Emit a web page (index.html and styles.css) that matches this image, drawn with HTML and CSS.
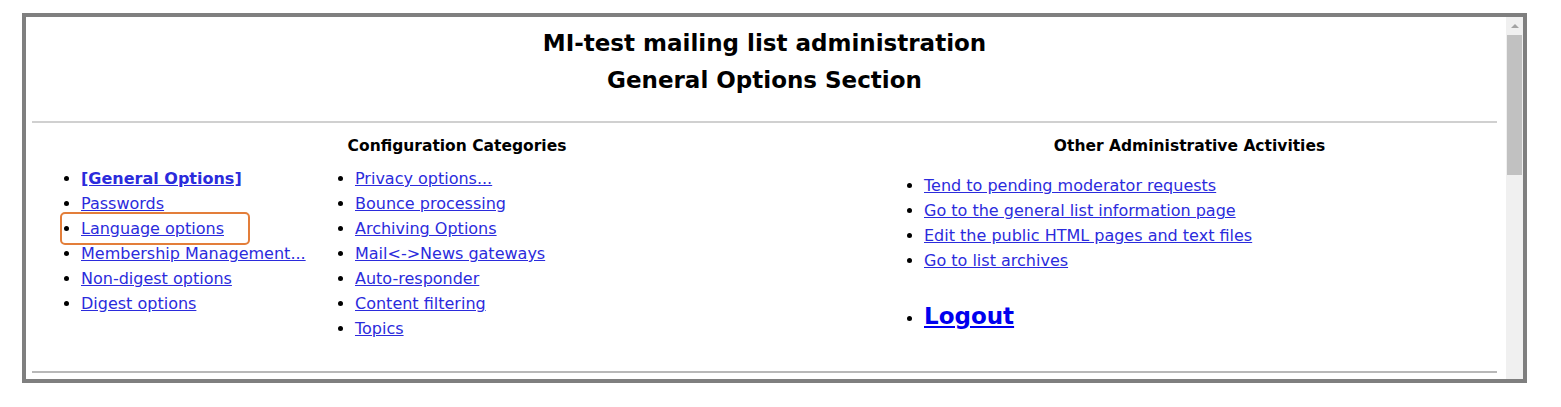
FILE: index.html
```
<!DOCTYPE html>
<html>
<head>
<meta charset="utf-8">
<link rel="stylesheet" href="styles.css">
</head>
<body>
<div class="frame">
  <div class="page">
    <div class="title">
      <div>MI-test mailing list administration</div>
      <div>General Options Section</div>
    </div>
    <hr class="rule">
    <div class="cols">
      <div class="config">
        <div class="head">Configuration Categories</div>
        <div class="subcols">
          <ul class="list list-a">
            <li><a href="#" class="current">[General Options]</a></li>
            <li><a href="#">Passwords</a></li>
            <li class="marked"><a href="#">Language options</a><span class="mark"></span></li>
            <li><a href="#">Membership Management...</a></li>
            <li><a href="#">Non-digest options</a></li>
            <li><a href="#">Digest options</a></li>
          </ul>
          <ul class="list list-b">
            <li><a href="#">Privacy options...</a></li>
            <li><a href="#">Bounce processing</a></li>
            <li><a href="#">Archiving Options</a></li>
            <li><a href="#">Mail&lt;-&gt;News gateways</a></li>
            <li><a href="#">Auto-responder</a></li>
            <li><a href="#">Content filtering</a></li>
            <li><a href="#">Topics</a></li>
          </ul>
        </div>
      </div>
      <div class="other">
        <div class="head">Other Administrative Activities</div>
        <ul class="list list-c">
          <li><a href="#">Tend to pending moderator requests</a></li>
          <li><a href="#">Go to the general list information page</a></li>
          <li><a href="#">Edit the public HTML pages and text files</a></li>
          <li><a href="#">Go to list archives</a></li>
        </ul>
        <ul class="list list-c logout-list">
          <li><a href="#" class="logout">Logout</a></li>
        </ul>
      </div>
    </div>
    <hr class="rule rule-bottom">
  </div>
  <div class="scrollbar">
    <div class="arrow"></div>
    <div class="thumb"></div>
  </div>
</div>
</body>
</html>
```
FILE: styles.css
```
html, body {
  margin: 0;
  padding: 0;
  background: #ffffff;
}
body {
  font-family: "DejaVu Sans", Verdana, sans-serif;
  color: #000;
}
.frame {
  margin: 13px 0 0 22px;
  width: 1497px;
  height: 362px;
  border: 4px solid #7f7f7f;
  display: flex;
  overflow: hidden;
  background: #fff;
}
.page {
  flex: 1;
  padding: 0 9px 0 6px;
  overflow: hidden;
}
.title {
  text-align: center;
  font-weight: bold;
  font-size: 23px;
  line-height: 37px;
  padding-top: 8px;
}
.rule {
  margin: 22px 0 0 0;
  border: none;
  border-top: 2px solid #d0d0d0;
  height: 0;
}
.rule-bottom {
  margin-top: 30px;
  border-top-color: #b8b8b8;
}
.cols {
  display: grid;
  grid-template-columns: 850px 1fr;
}
.head {
  text-align: center;
  font-weight: bold;
  font-size: 15.5px;
  line-height: 20px;
  margin-top: 13px;
}
.subcols {
  display: flex;
}
.list {
  margin: 0;
  padding: 0;
  font-size: 16px;
  line-height: 25px;
}
.list a {
  color: #2b2bdc;
}
.list-a {
  margin-top: 10px;
  padding-left: 49px;
  width: 225px;
}
.list-b {
  margin-top: 10px;
  padding-left: 49px;
}
.list-c {
  margin-top: 17px;
  padding-left: 42px;
}
.current {
  font-weight: bold;
}
.marked {
  position: relative;
}
.mark {
  position: absolute;
  left: -21px;
  top: -4px;
  width: 186px;
  height: 29px;
  border: 2.5px solid #e37e3a;
  border-radius: 5px;
}
.logout-list {
  margin-top: 31px;
}
.logout {
  font-size: 23px;
  font-weight: bold;
  color: #0000ee !important;
}
.scrollbar {
  width: 17px;
  background: #f0f0f0;
  display: flex;
  flex-direction: column;
  align-items: center;
}
.arrow {
  margin-top: 7px;
  width: 0;
  height: 0;
  border-left: 4px solid transparent;
  border-right: 4px solid transparent;
  border-bottom: 4px solid #a3a3a3;
}
.thumb {
  margin-top: 7px;
  width: 15px;
  height: 140px;
  background: #c1c1c1;
}
```
